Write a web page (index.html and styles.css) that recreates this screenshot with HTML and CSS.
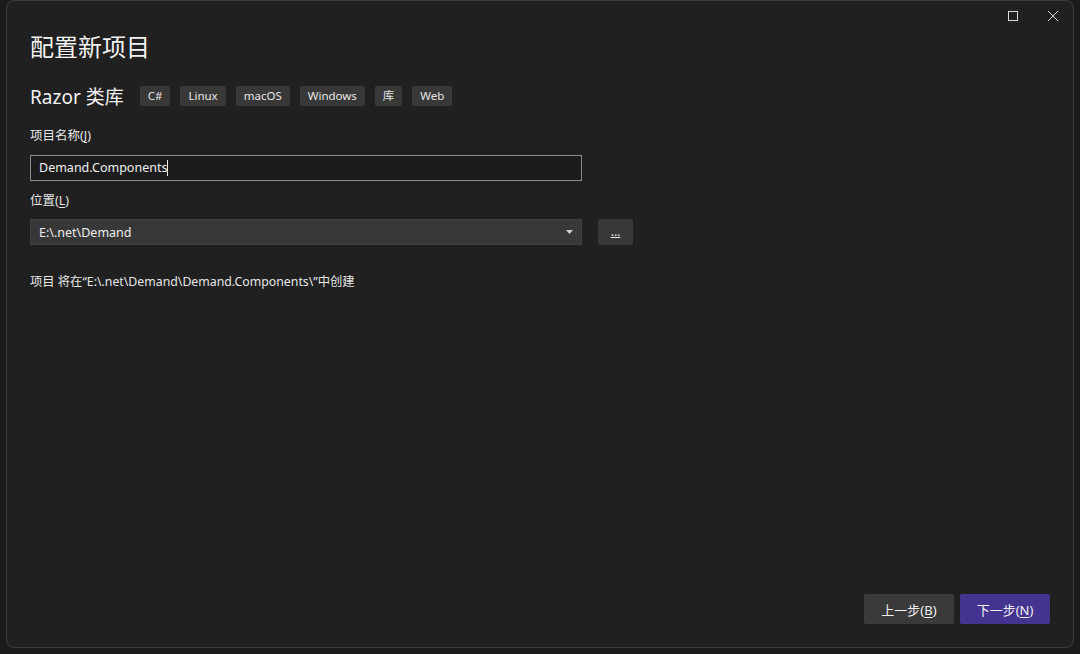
FILE: index.html
```html
<!DOCTYPE html>
<html lang="zh-CN">
<head>
<meta charset="utf-8">
<title>配置新项目</title>
<link rel="stylesheet" href="styles.css">
</head>
<body>
<div class="window">
  <div class="titlebar">
    <button class="ctl" aria-label="最大化">
      <svg width="12" height="12" viewBox="0 0 12 12"><rect x="1.5" y="1.5" width="9" height="9" fill="none" stroke="#d8d8d8" stroke-width="1"/></svg>
    </button>
    <button class="ctl" aria-label="关闭">
      <svg width="12" height="12" viewBox="0 0 12 12"><path d="M1 1 L11 11 M11 1 L1 11" stroke="#d8d8d8" stroke-width="1"/></svg>
    </button>
  </div>
  <div class="content">
    <h1 class="title">配置新项目</h1>
    <div class="template-row">
      <span class="template-name">Razor 类库</span>
      <span class="tag">C#</span>
      <span class="tag">Linux</span>
      <span class="tag">macOS</span>
      <span class="tag">Windows</span>
      <span class="tag">库</span>
      <span class="tag">Web</span>
    </div>
    <div class="label">项目名称(<u>J</u>)</div>
    <div class="input">Demand.Components<span class="caret"></span></div>
    <div class="label">位置(<u>L</u>)</div>
    <div class="loc-row">
      <div class="select">
        <span>E:\.net\Demand</span>
        <svg class="arrow" width="7" height="4" viewBox="0 0 7 4"><path d="M0 0 H7 L3.5 4 Z" fill="#cfcfcf"/></svg>
      </div>
      <div class="browse"><span class="dots">...</span></div>
    </div>
    <p class="path">项目 将在“E:\.net\Demand\Demand.Components\”中创建</p>
  </div>
  <div class="footer">
    <button class="btn">上一步(<u>B</u>)</button>
    <button class="btn primary">下一步(<u>N</u>)</button>
  </div>
</div>
</body>
</html>
```

FILE: styles.css
```css
html, body {
  margin: 0;
  padding: 0;
}
body {
  width: 1080px;
  height: 654px;
  background: #1a1a1a;
  font-family: "Noto Sans", "Noto Sans CJK SC", sans-serif;
  color: #f0f0f0;
  overflow: hidden;
  box-sizing: border-box;
  padding: 0 6px 6px 6px;
}
.window {
  height: 648px;
  box-sizing: border-box;
  background: #202020;
  border: 1px solid #3c3c3c;
  border-radius: 8px;
  display: flex;
  flex-direction: column;
}
.titlebar {
  height: 29px;
  display: flex;
  justify-content: flex-end;
  align-items: center;
  padding-right: 0;
}
.ctl {
  width: 40px;
  height: 29px;
  background: transparent;
  border: 0;
  padding: 0;
  display: flex;
  align-items: center;
  justify-content: center;
}
.content {
  padding: 0 23px;
  display: flex;
  flex-direction: column;
  align-items: flex-start;
}
.title {
  margin: 0;
  font-size: 24px;
  line-height: 32px;
  font-weight: 400;
  font-family: "Noto Sans CJK SC", sans-serif;
  color: #f2f2f2;
}
.template-row {
  margin-top: 20px;
  height: 28px;
  display: flex;
  align-items: center;
  gap: 10px;
}
.template-name {
  font-size: 19px;
  margin-right: 6px;
  color: #f2f2f2;
}
.tag {
  height: 20px;
  line-height: 20px;
  padding: 0 8px;
  background: #383838;
  border-radius: 2px;
  font-size: 11.5px;
  color: #e6e6e6;
}
.label {
  margin-top: 17px;
  font-size: 12.5px;
  line-height: 18px;
  color: #e6e6e6;
}
.label u, .btn u { text-underline-offset: 2px; }
.input {
  margin-top: 10px;
  width: 552px;
  height: 26px;
  box-sizing: border-box;
  border: 1px solid #8a8a8a;
  background: #1c1c1c;
  font-size: 12.5px;
  line-height: 24px;
  padding-left: 8px;
  color: #f0f0f0;
  display: flex;
  align-items: center;
}
.caret {
  display: inline-block;
  width: 1px;
  height: 16px;
  background: #f0f0f0;
}
.input + .label { margin-top: 11px; }
.loc-row {
  margin-top: 9px;
  display: flex;
  gap: 16px;
}
.select {
  width: 552px;
  height: 26px;
  box-sizing: border-box;
  background: #383838;
  border: 1px solid #3f3f3f;
  font-size: 12.5px;
  padding: 0 8px;
  display: flex;
  align-items: center;
  justify-content: space-between;
  color: #ececec;
}
.browse {
  width: 35px;
  height: 26px;
  background: #383838;
  border-radius: 2px;
  display: flex;
  align-items: center;
  justify-content: center;
  font-size: 12px;
  color: #e6e6e6;
}
.dots { text-decoration: underline; text-underline-offset: 1px; line-height: 12px; }
.path {
  margin: 28px 0 0 0;
  font-size: 12.3px;
  line-height: 18px;
  color: #e6e6e6;
}
.footer {
  margin-top: auto;
  display: flex;
  justify-content: flex-end;
  gap: 6px;
  padding: 0 23px 23px 0;
}
.btn {
  width: 90px;
  height: 30px;
  border: 0;
  border-radius: 2px;
  background: #3a3a3a;
  color: #f0f0f0;
  font-family: "Noto Sans", "Noto Sans CJK SC", sans-serif;
  font-size: 13px;
  padding: 0;
}
.btn.primary {
  background: #44348f;
}
```
